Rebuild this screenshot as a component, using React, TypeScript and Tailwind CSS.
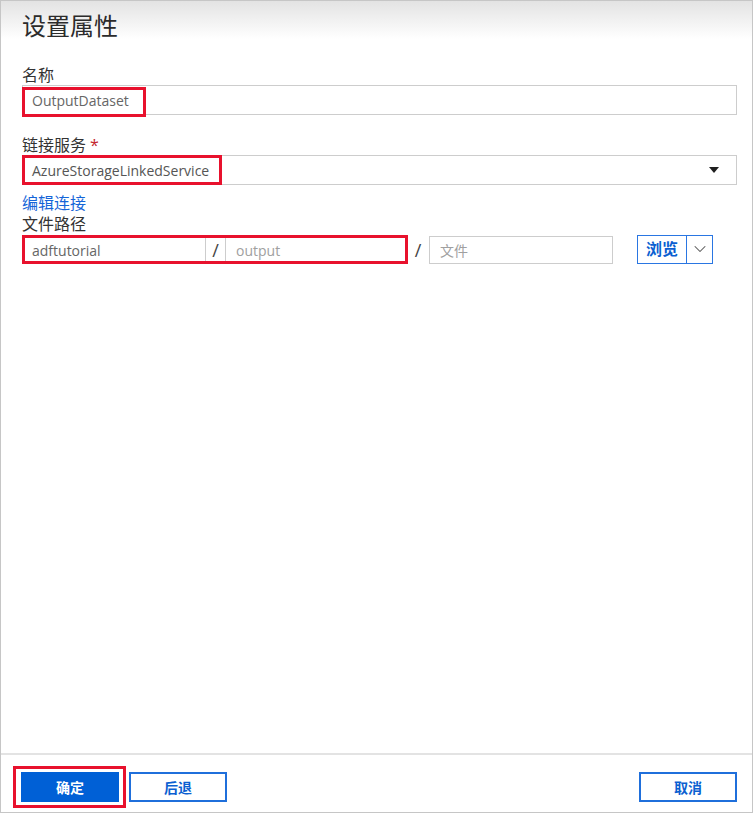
import { ChevronDown } from "lucide-react";

const font = "font-['Open_Sans','Noto_Sans_CJK_SC',sans-serif]";

function RedBox({ className }: { className: string }) {
  return (
    <div
      className={`pointer-events-none absolute border-[3px] border-[#e8112d] ${className}`}
    />
  );
}

function Label({ text, required, className = "" }: { text: string; required?: boolean; className?: string }) {
  return (
    <div className={`text-[16px] leading-[20px] text-[#333] ${className}`}>
      {text}
      {required ? <span className="ml-1 text-[#c4262e]">*</span> : null}
    </div>
  );
}

export default function App() {
  return (
    <div
      className={`${font} flex h-[813px] w-[753px] flex-col border border-[#c6c6c6] bg-[linear-gradient(to_bottom,#e3e3e3,#ffffff_38px)]`}
    >
      <div className="flex-1 pl-[21px] pr-[15px]">
        <h1 className="mt-[10px] text-[24px] leading-[30px] text-[#2b2b2b]">设置属性</h1>

        <Label text="名称" className="mt-[24px]" />
        <div className="relative">
          <div className="flex h-[30px] items-center border border-[#cdcdcd] pl-[9px] text-[14px] text-[#666]">
            OutputDataset
          </div>
          <RedBox className="left-0 top-[2px] h-[30px] w-[124px]" />
        </div>

        <Label text="链接服务" required className="mt-[20px]" />
        <div className="relative">
          <div className="flex h-[30px] items-center justify-between border border-[#cdcdcd] pl-[9px] pr-[17px] text-[14px] text-[#555]">
            <span>AzureStorageLinkedService</span>
            <svg width="10" height="6" viewBox="0 0 10 6">
              <path d="M0 0h10L5 6z" fill="#1f1f1f" />
            </svg>
          </div>
          <RedBox className="left-0 top-0 h-[30px] w-[200px]" />
        </div>

        <div className="mt-[8px] text-[16px] leading-[20px] text-[#1565d8]">编辑连接</div>
        <Label text="文件路径" className="mt-[1px]" />

        <div className="mt-[2px] flex h-[28px] items-center text-[14px]">
          <div className="relative flex h-full">
            <div className="flex h-full w-[184px] items-center border border-[#cdcdcd] pl-[9px] text-[#666]">
              adftutorial
            </div>
            <div className="flex h-full w-[19px] items-center justify-center text-[18px] text-[#444]">/</div>
            <div className="flex h-full w-[182px] items-center border border-[#cdcdcd] pl-[10px] text-[#a0a0a0]">
              output
            </div>
            <RedBox className="-top-[1px] left-0 h-[29px] w-[386px]" />
          </div>
          <div className="flex w-[22px] justify-center text-[18px] text-[#444]">/</div>
          <div className="flex h-full w-[184px] items-center border border-[#cdcdcd] pl-[10px] text-[14px] text-[#a0a0a0]">
            文件
          </div>
          <div className="ml-[24px] flex h-[29px] -translate-y-[1px] border border-[#2a76e2]">
            <div className="flex w-[49px] items-center justify-center border-r border-[#2a76e2] text-[16px] font-bold text-[#0b5fd1]">
              浏览
            </div>
            <div className="flex w-[25px] items-center justify-center text-[#555]">
              <ChevronDown size={20} strokeWidth={1.25} />
            </div>
          </div>
        </div>
      </div>

      <div className="flex h-[59px] items-start justify-between border-t-2 border-[#e3e3e3] pl-[20px] pr-[15px] pt-[17px]">
        <div className="flex gap-[10px]">
          <div className="relative">
            <button className="h-[30px] w-[98px] bg-[#0060d6] text-[14px] font-bold text-white">确定</button>
            <RedBox className="-left-[8px] -top-[6px] h-[42px] w-[113px]" />
          </div>
          <button className="h-[30px] w-[98px] border-2 border-[#1f6fdb] text-[14px] font-bold text-[#0b5fd1]">后退</button>
        </div>
        <button className="h-[30px] w-[98px] border-2 border-[#1f6fdb] text-[14px] font-bold text-[#0b5fd1]">取消</button>
      </div>
    </div>
  );
}
